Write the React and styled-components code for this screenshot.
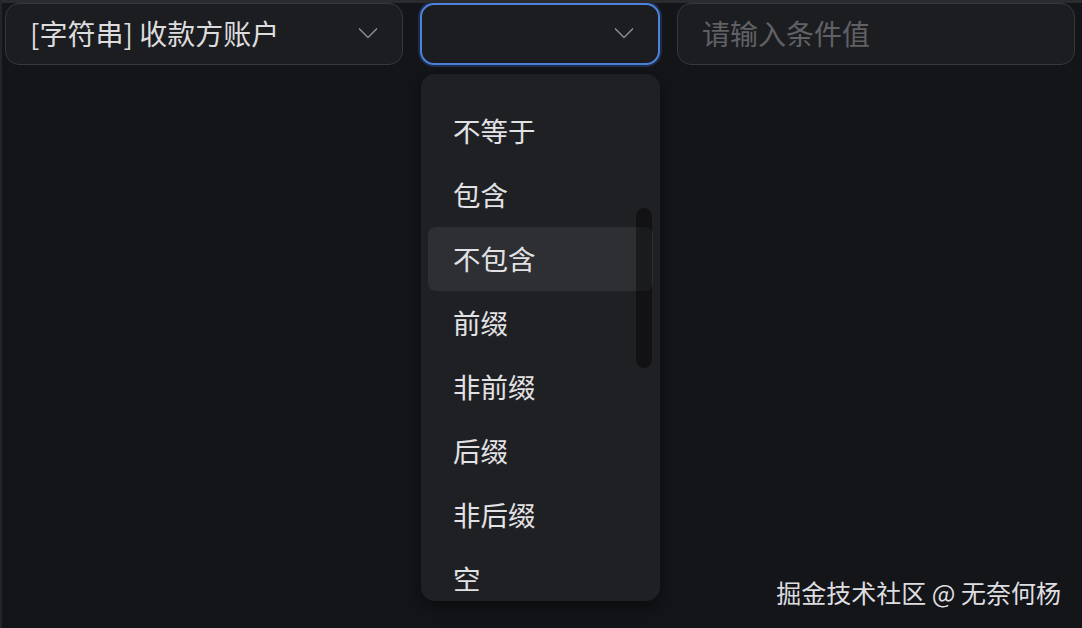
import styled, { createGlobalStyle } from "styled-components";

const GlobalStyle = createGlobalStyle`
  html, body {
    margin: 0;
    padding: 0;
    background: #141519;
  }
  body {
    font-family: "Noto Sans CJK SC", "Noto Sans", sans-serif;
  }
`;

const Page = styled.div`
  position: relative;
  width: 1082px;
  height: 628px;
  box-sizing: border-box;
  overflow: hidden;
  background: #141519;
  border-top: 3px solid #2a2b2f;
  border-left: 2px solid #232428;
`;

const FilterRow = styled.div`
  display: flex;
  align-items: flex-start;
  gap: 17px;
  padding-left: 3px;
`;

const SelectBox = styled.div`
  box-sizing: border-box;
  width: ${({ $width }) => $width}px;
  height: 62px;
  display: flex;
  align-items: center;
  justify-content: space-between;
  padding: 0 24px 3px 24px;
  background: #1c1d21;
  border: ${({ $focused }) => ($focused ? "2px solid #4c82da" : "1.5px solid #37383c")};
  border-radius: 14px;
  box-shadow: ${({ $focused }) => ($focused ? "0 0 0 2px rgba(52, 92, 170, 0.35)" : "none")};
  color: #dcdcde;
  font-size: 28px;
  line-height: 1;
`;

const Placeholder = styled.span`
  color: #606165;
`;

const SelectWrap = styled.div`
  position: relative;
`;

const Dropdown = styled.div`
  position: absolute;
  top: 71px;
  left: 1px;
  width: 239px;
  height: 527px;
  box-sizing: border-box;
  padding: 25px 7px 0;
  background: #1f2024;
  border-radius: 14px;
  box-shadow: 0 6px 18px rgba(0, 0, 0, 0.45);
  overflow: hidden;
`;

const Option = styled.div`
  height: 64px;
  display: flex;
  align-items: center;
  padding: 0 0 2px 25px;
  box-sizing: border-box;
  border-radius: 8px;
  color: #e2e2e4;
  font-size: 27.5px;
  background: ${({ $active }) => ($active ? "#2e2f33" : "transparent")};
`;

const ScrollThumb = styled.div`
  position: absolute;
  top: 134px;
  right: 8px;
  width: 16px;
  height: 160px;
  border-radius: 8px;
  background: rgba(0, 0, 0, 0.42);
`;

const Watermark = styled.div`
  position: absolute;
  right: 21px;
  bottom: 23px;
  color: #dedee0;
  font-size: 25px;
  line-height: 1;
`;

function Chevron() {
  return (
    <svg width="20" height="12" viewBox="0 0 20 12" fill="none">
      <path d="M1 1.5 L10 10.5 L19 1.5" stroke="#8b8c90" strokeWidth="1.5" />
    </svg>
  );
}

const options = ["不等于", "包含", "不包含", "前缀", "非前缀", "后缀", "非后缀", "空"];

export default function App() {
  return (
    <Page>
      <GlobalStyle />
      <FilterRow>
        <SelectBox $width={398}>
          <span>[字符串] 收款方账户</span>
          <Chevron />
        </SelectBox>
        <SelectWrap>
          <SelectBox $width={240} $focused>
            <span />
            <Chevron />
          </SelectBox>
          <Dropdown>
            {options.map((o) => (
              <Option key={o} $active={o === "不包含"}>
                {o}
              </Option>
            ))}
            <ScrollThumb />
          </Dropdown>
        </SelectWrap>
        <SelectBox $width={398}>
          <Placeholder>请输入条件值</Placeholder>
        </SelectBox>
      </FilterRow>
      <Watermark>掘金技术社区 @ 无奈何杨</Watermark>
    </Page>
  );
}
